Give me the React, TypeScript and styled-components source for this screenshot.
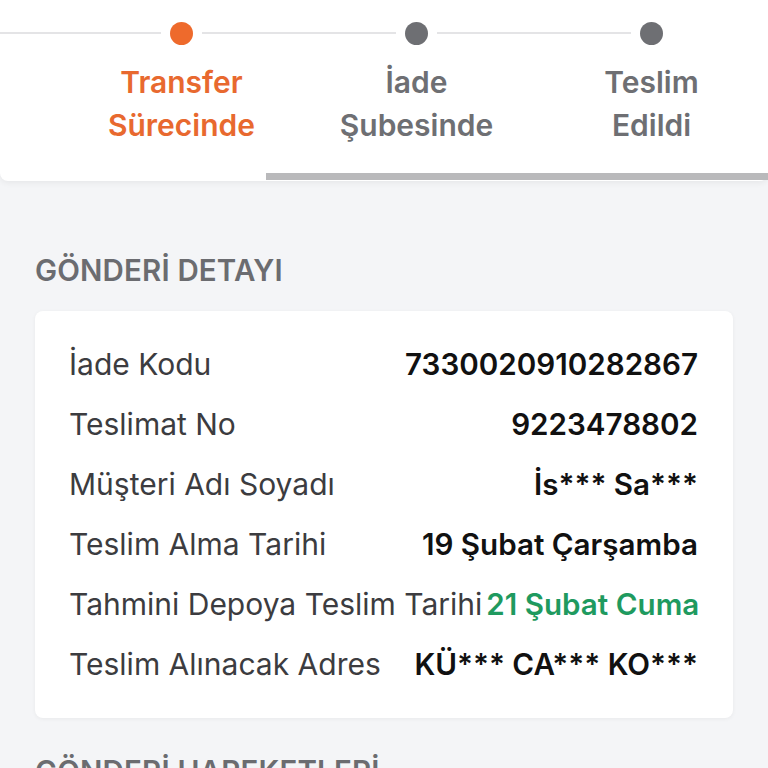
import styled, { createGlobalStyle } from 'styled-components';

const GlobalStyle = createGlobalStyle`
	html, body {
		margin: 0;
		padding: 0;
		background: #f4f5f7;
		font-family: Inter, "Noto Sans", "Liberation Sans", sans-serif;
		-webkit-font-smoothing: antialiased;
	}
`;

const Page = styled.div`
	width: 768px;
	height: 768px;
	overflow: hidden;
	background: #f4f5f7;
`;

const StepPanel = styled.div`
	position: relative;
	background: #fff;
	border-radius: 0 0 8px 8px;
	box-shadow: 0 2px 6px rgba(0, 0, 0, 0.06);
	height: 181px;
`;

const Track = styled.div`
	display: flex;
	align-items: center;
	height: 66px;
`;

const Line = styled.div<{ $w: number }>`
	width: ${p => p.$w}px;
	height: 2px;
	background: #e4e4e6;
`;

const Dot = styled.div<{ $active?: boolean }>`
	width: 23px;
	height: 23px;
	border-radius: 50%;
	margin: 0 9px;
	background: ${p => (p.$active ? '#ee6a2c' : '#6e6f73')};
	flex-shrink: 0;
`;

const Labels = styled.div`
	display: grid;
	grid-template-columns: repeat(3, 235px);
	margin-left: 64px;
	margin-top: -5px;
`;

const StepLabel = styled.div<{ $active?: boolean }>`
	text-align: center;
	font-size: 30px;
	font-weight: 600;
	line-height: 43px;
	color: ${p => (p.$active ? '#e8692f' : '#6e6f73')};
`;

// scroll indicator sitting on the panel's bottom edge
const ScrollThumb = styled.div`
	position: absolute;
	left: 266px;
	right: 0;
	bottom: 1px;
	height: 7px;
	background: #b9b9bb;
`;

const Section = styled.div`
	padding: 0 35px;
`;

const Heading = styled.h2`
	margin: 0;
	padding: 74px 0 26px;
	font-size: 29.5px;
	line-height: 30px;
	font-weight: 600;
	color: #6b6c70;
	letter-spacing: 0.15px;
`;

const Card = styled.div`
	background: #fff;
	border-radius: 8px;
	box-shadow: 0 1px 4px rgba(0, 0, 0, 0.05);
	padding: 23px 35px 24px 34px;
`;

const Row = styled.div`
	display: flex;
	justify-content: space-between;
	align-items: center;
	gap: 4px;
	height: 60px;
`;

const Label = styled.span`
	font-size: 30px;
	color: #3c3c40;
	white-space: nowrap;
`;

const Value = styled.span<{ $green?: boolean }>`
	font-size: 29.6px;
	font-weight: 600;
	white-space: nowrap;
	color: ${p => (p.$green ? '#1f9a5f' : '#111')};
`;

const NextHeading = styled(Heading)`
	padding-top: 38px;
`;

const rows: { label: string; value: string; green?: boolean }[] = [
	{ label: 'İade Kodu', value: '7330020910282867' },
	{ label: 'Teslimat No', value: '9223478802' },
	{ label: 'Müşteri Adı Soyadı', value: 'İs*** Sa***' },
	{ label: 'Teslim Alma Tarihi', value: '19 Şubat Çarşamba' },
	{ label: 'Tahmini Depoya Teslim Tarihi', value: '21 Şubat Cuma', green: true },
	{ label: 'Teslim Alınacak Adres', value: 'KÜ*** CA*** KO***' },
];

export default function App() {
	return (
		<Page>
			<GlobalStyle />
			<StepPanel>
				<Track>
					<Line $w={161} />
					<Dot $active />
					<Line $w={194} />
					<Dot />
					<Line $w={194} />
					<Dot />
				</Track>
				<Labels>
					<StepLabel $active>Transfer<br />Sürecinde</StepLabel>
					<StepLabel>İade<br />Şubesinde</StepLabel>
					<StepLabel>Teslim<br />Edildi</StepLabel>
				</Labels>
				<ScrollThumb />
			</StepPanel>
			<Section>
				<Heading>GÖNDERİ DETAYI</Heading>
				<Card>
					{rows.map(r => (
						<Row key={r.label}>
							<Label>{r.label}</Label>
							<Value $green={r.green}>{r.value}</Value>
						</Row>
					))}
				</Card>
				<NextHeading>GÖNDERİ HAREKETLERİ</NextHeading>
			</Section>
		</Page>
	);
}
